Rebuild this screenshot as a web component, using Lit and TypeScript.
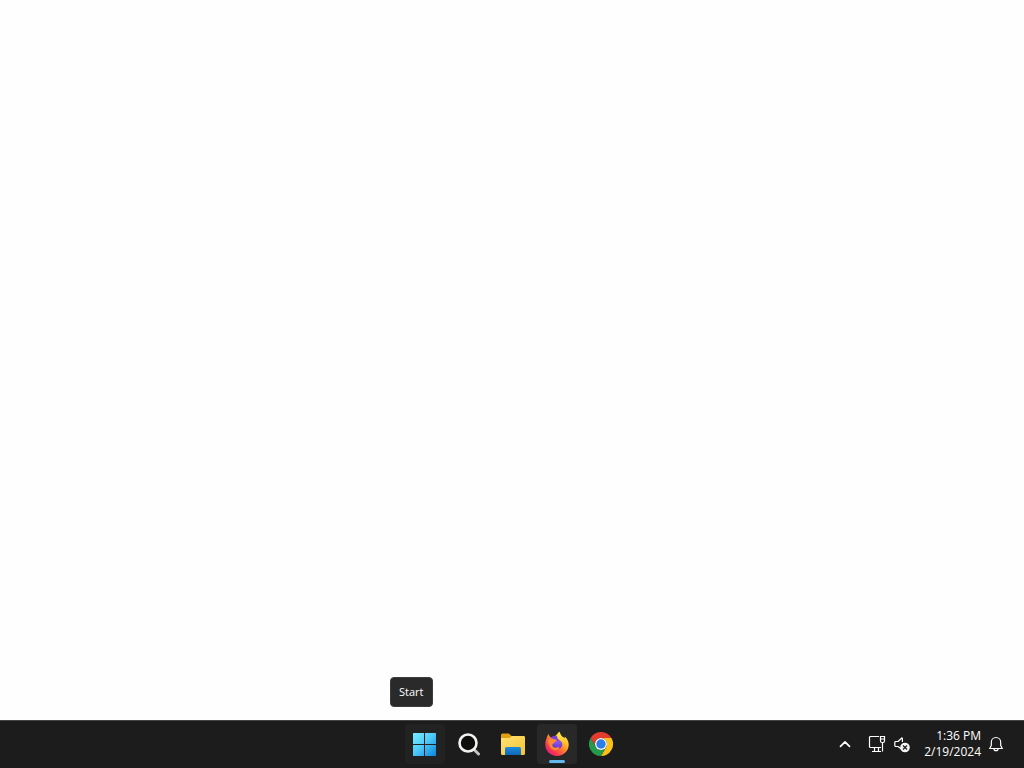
import { LitElement, html, css } from "lit";
import { customElement, property } from "lit/decorators.js";

const startIcon = html`<svg width="24" height="24" viewBox="1 0 24 24" aria-hidden="true">
  <defs><linearGradient id="win" x1="0" y1="0" x2="24" y2="24" gradientUnits="userSpaceOnUse">
    <stop offset="0" stop-color="#7df0ff"/><stop offset=".5" stop-color="#4fc9f8"/><stop offset="1" stop-color="#0a84dc"/>
  </linearGradient></defs>
  <path fill="url(#win)" d="M1.500 1h10.500V12H1V1.500a.5.5 0 0 1 .5-.5zM13 1h10.500a.5.5 0 0 1 .5.5V12H13zM1 13h11v11H1.500a.5.5 0 0 1-.5-.5zM13 13h11v10.500a.5.5 0 0 1-.5.5H13z"/>
</svg>`;

const searchIcon = html`<svg width="24" height="24" viewBox="0 0 24 24" aria-hidden="true">
  <path d="M17.500 18l4 4" stroke="#c4c4c4" stroke-width="3" stroke-linecap="round"/>
  <circle cx="11" cy="11" r="8.500" fill="#0e0e0c" stroke="#f2f2f2" stroke-width="2.600"/>
</svg>`;

const folderIcon = html`<svg width="26" height="24" viewBox="0 0 26 24" aria-hidden="true">
  <defs>
    <linearGradient id="fold" x1="0" y1="0" x2="1" y2="1"><stop offset="0" stop-color="#ffe178"/><stop offset="1" stop-color="#f5c52f"/></linearGradient>
    <linearGradient id="foldBlue" x1="0" y1="0" x2="0" y2="1"><stop offset="0" stop-color="#1d8be0"/><stop offset="1" stop-color="#0f66b8"/></linearGradient>
  </defs>
  <path fill="#e0a10e" d="M1 3a1.500 1.500 0 0 1 1.500-1.500h6.300l2.700 2.500h12A1.500 1.500 0 0 1 25 5.500V12H1z"/>
  <path fill="url(#fold)" d="M1 6h8.500L12 4h11.500A1.500 1.500 0 0 1 25 5.500v16a1.500 1.500 0 0 1-1.500 1.500h-21A1.500 1.500 0 0 1 1 21.500z"/>
  <path fill="url(#foldBlue)" d="M5 23v-6.500A1.500 1.500 0 0 1 6.500 15h13a1.500 1.500 0 0 1 1.500 1.500V23z"/>
</svg>`;

const firefoxIcon = html`<svg width="26" height="26" viewBox="0 0 26 26" aria-hidden="true">
  <defs>
    <linearGradient id="fox" x1="22" y1="3" x2="4" y2="23" gradientUnits="userSpaceOnUse">
      <stop offset="0" stop-color="#fff04a"/><stop offset=".3" stop-color="#ffb52b"/><stop offset=".55" stop-color="#ff7132"/><stop offset=".8" stop-color="#fa3652"/><stop offset="1" stop-color="#e31587"/>
    </linearGradient>
    <radialGradient id="globe" cx=".6" cy=".2" r=".9"><stop offset="0" stop-color="#9b62f2"/><stop offset=".6" stop-color="#7440d8"/><stop offset="1" stop-color="#4f2ca8"/></radialGradient>
    <linearGradient id="flame" x1="0" y1="0" x2="0" y2="1"><stop offset="0" stop-color="#fff352"/><stop offset=".6" stop-color="#ffc42b"/><stop offset="1" stop-color="#ff7a24"/></linearGradient>
  </defs>
  <path fill="url(#fox)" d="M2.800 6.800C3 5.200 3.700 4 4.700 3c.2 1.300.8 2.300 1.800 3.200 1.300-.3 2.500-.2 3.500.1l5.300-5.500c1.200 1.400 1.300 3.300 2.800 4.600l3 1.600c-.1-.8-.2-1.100-.4-1.600 2.300 1.900 3.900 4.500 4 8.100C24.700 19.800 19.600 25 13 25S1.300 20 1.300 13.500c0-2.500.5-4.800 1.500-6.700z"/>
  <circle cx="12.700" cy="12.700" r="5.700" fill="url(#globe)"/>
  <path fill="#7d3fe0" d="M6.500 6.800C8.500 4.700 12 4 14 5.500l1.500 5-6-1z"/>
  <path fill="url(#flame)" d="M15.300.8c.2 3 2.200 4.300 3.700 6.300 2.600 3.500 2.100 8.500-1.300 10.900 1.300-2.300 1.300-5.400-.5-7.400-1.100-1.200-3-1.800-3.700-3.300-1-2.200-.1-4.800 1.800-6.500z"/>
  <path fill="#ff8a34" d="M4.500 8.800c1.700-1.600 4-1.700 6-.6l2.500.7c-.1 1.100-1 1.500-2.200 2-.5.300-.5.800-.6 1.300-1.300.4-2 1.100-1.800 2.300.3 2 2.400 2.700 4.300 2 1.400-.5 2.300-.5 3 .3-1.100 2.200-4.100 3.200-6.700 1.900C5.600 17 3.500 12.700 4.500 8.800z"/>
</svg>`;

const chromeIcon = html`<svg width="24" height="24" viewBox="0 0 24 24" aria-hidden="true">
  <path fill="#e33b2e" d="M1.600 6A12 12 0 0 1 22.400 6H12a6 6 0 0 0-5.200 9z"/>
  <path fill="#fbc116" d="M22.400 6A12 12 0 0 1 12 24l5.200-9A6 6 0 0 0 12 6z"/>
  <path fill="#269a4b" d="M12 24A12 12 0 0 1 1.600 6l5.200 9a6 6 0 0 0 10.400 0z"/>
  <circle cx="12" cy="12" r="6" fill="#fff"/><circle cx="12" cy="12" r="4.700" fill="#2b7de9"/>
</svg>`;

const chevronIcon = html`<svg width="16" height="16" viewBox="0 0 16 16" fill="none" stroke="#fff" stroke-width="1.700" stroke-linecap="round" stroke-linejoin="round" aria-hidden="true"><path d="M3.500 10.300L8 5.800l4.500 4.500"/></svg>`;

const networkIcon = html`<svg width="18" height="18" viewBox="0 0 18 18" fill="none" stroke="#fff" stroke-width="1.200" aria-hidden="true">
  <path d="M11 1.500H2.500a1 1 0 0 0-1 1v9a1 1 0 0 0 1 1H13M6.500 12.500v3.500M10.500 12.500v3.500M4 16.500h9M14.500 7.500v9"/>
  <path d="M12.500 1.500h4v4.500a1.500 1.500 0 0 1-1.500 1.500h-1A1.500 1.500 0 0 1 12.500 6zM12.500 4h4"/>
</svg>`;

const mutedIcon = html`<svg width="18" height="18" viewBox="0 0 18 18" aria-hidden="true">
  <path d="M9 14.500L5 11.500H2.800a1 1 0 0 1-1-1v-3a1 1 0 0 1 1-1H5l3.500-3.300a.5.5 0 0 1 .9.4V7" fill="none" stroke="#fff" stroke-width="1.200" stroke-linejoin="round"/>
  <circle cx="12" cy="12.500" r="4.800" fill="#f5f5f5"/>
  <path d="M10 10.500l4 4M14 10.500l-4 4" stroke="#1c1c1c" stroke-width="1.200"/>
</svg>`;

const bellIcon = html`<svg width="16" height="16" viewBox="0 0 16 16" fill="none" stroke="#fff" stroke-width="1.200" stroke-linejoin="round" aria-hidden="true">
  <path d="M8 1.500a4.700 4.700 0 0 0-4.700 4.700v3.300L1.700 12.500h12.600l-1.600-3V6.200A4.700 4.700 0 0 0 8 1.500zM6 12.700a2 2 0 0 0 4 0"/>
</svg>`;

@customElement("task-button")
class TaskButton extends LitElement {
  @property() label = "";
  @property() tip = "";
  @property() state = "";
  @property({ attribute: false }) icon: unknown;

  static styles = css`
    :host { display: block; position: relative; }
    button {
      display: flex; align-items: center; justify-content: center;
      position: relative; width: 40px; height: 40px; padding: 0;
      border: 0; border-radius: 4px; background: transparent;
    }
    .hover { background: #222; }
    .active { background: #282828; }
    .active::after {
      content: ""; position: absolute; bottom: 1px; left: 12px;
      width: 16px; height: 3px; border-radius: 2px; background: #62b8ee;
    }
    svg { display: block; }
    .tip {
      position: absolute; left: -15px; bottom: 57px; box-sizing: border-box;
      padding: 7px 9px 7px 8px; border-radius: 4px; border: 1px solid #3c3c3c; background: #2a2a2a; color: #fff;
      font-size: 11px; font-weight: 600; line-height: 14px; white-space: nowrap;
      font-weight: 500;
    }
  `;

  render() {
    return html`<button class=${this.state} aria-label=${this.label}>${this.icon}</button>
      ${this.tip ? html`<div class="tip" role="tooltip">${this.tip}</div>` : ""}`;
  }
}

@customElement("app-root")
class AppRoot extends LitElement {
  static styles = css`
    :host {
      display: flex; flex-direction: column; min-height: 100vh;
      background: #fefefe; font-family: "Open Sans", "Noto Sans", sans-serif;
    }
    main { flex: 1; }
    footer {
      display: grid; grid-template-columns: 1fr auto 1fr; align-items: center;
      height: 48px; background: #1c1c1c; box-shadow: inset 0 1px #434343; color: #fff;
    }
    .apps { grid-column: 2; display: flex; gap: 4px; padding-left: 2px; }
    .tray { display: flex; align-items: center; justify-content: flex-end; padding-right: 20px; }
    .tray button {
      display: flex; align-items: center; height: 40px; padding: 0;
      border: 0; background: transparent; color: inherit; font: inherit;
    }
    .more { margin-right: 15px; }
    .tray .status { gap: 7px; margin-right: 13px; }
    .tray .clock {
      flex-direction: column; align-items: flex-end; justify-content: center;
      margin-right: 7px; font-size: 12px; font-weight: 500; line-height: 16px;
    }
    svg { display: block; }
  `;

  render() {
    return html`
      <main></main>
      <footer>
        <nav class="apps" aria-label="Taskbar">
          <task-button label="Start" tip="Start" state="hover" .icon=${startIcon}></task-button>
          <task-button label="Search" .icon=${searchIcon}></task-button>
          <task-button label="File Explorer" .icon=${folderIcon}></task-button>
          <task-button label="Firefox" state="active" .icon=${firefoxIcon}></task-button>
          <task-button label="Google Chrome" .icon=${chromeIcon}></task-button>
        </nav>
        <div class="tray">
          <button class="more" aria-label="Show hidden icons">${chevronIcon}</button>
          <button class="status" aria-label="Network and volume">${networkIcon}${mutedIcon}</button>
          <button class="clock"><span>1:36 PM</span><span>2/19/2024</span></button>
          <button aria-label="Notifications">${bellIcon}</button>
        </div>
      </footer>
    `;
  }
}
